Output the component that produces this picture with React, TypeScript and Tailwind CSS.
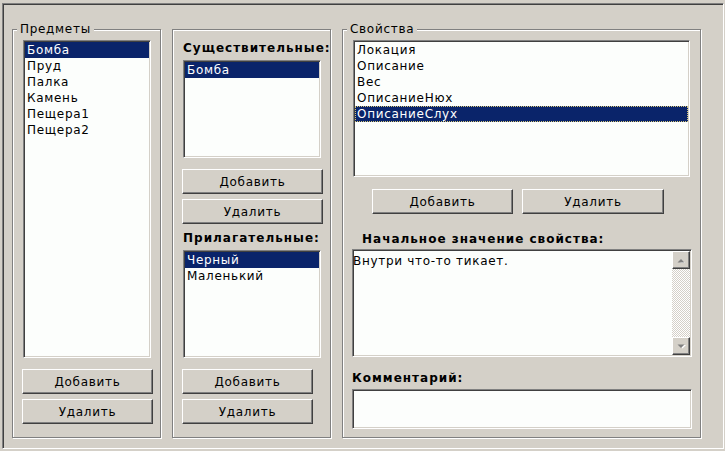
import React from "react";

const sunken =
  "border border-t-[#808080] border-l-[#808080] border-b-white border-r-white shadow-[inset_1px_1px_0_#404040,inset_-1px_-1px_0_#d4d0c8]";

function Group({
  title,
  className,
  children,
}: {
  title?: string;
  className: string;
  children: React.ReactNode;
}) {
  return (
    <div
      className={`relative flex flex-col border border-[#808080] shadow-[inset_1px_1px_0_#ffffff,1px_1px_0_#ffffff] ${className}`}
    >
      {title && (
        <span className="absolute -top-[9px] left-[4px] bg-[#d4d0c8] px-[3px] leading-4">
          {title}
        </span>
      )}
      {children}
    </div>
  );
}

function Button({ label, className }: { label: string; className: string }) {
  return (
    <button
      className={`h-[25px] border border-t-white border-l-white border-r-[#404040] border-b-[#404040] bg-[#d4d0c8] text-center leading-4 text-black shadow-[inset_-1px_-1px_0_#808080] ${className}`}
    >
      {label}
    </button>
  );
}

function ListBox({
  items,
  selected,
  focused,
  className,
}: {
  items: string[];
  selected: number;
  focused?: boolean;
  className: string;
}) {
  return (
    <div className={`flex flex-col bg-[#fcfefc] p-px ${sunken} ${className}`}>
      {items.map((it, i) => (
        <div
          key={it}
          className={
            i === selected
              ? `h-4 bg-[#0a246a] px-[2px] leading-4 text-white ${
                  focused ? "outline outline-1 -outline-offset-1 outline-dotted outline-[#d8c878]" : ""
                }`
              : "h-4 px-[2px] leading-4 text-black"
          }
        >
          {it}
        </div>
      ))}
    </div>
  );
}

function Arrow({ up }: { up?: boolean }) {
  return (
    <svg width="9" height="5" viewBox="0 0 9 5" className="block">
      {up ? (
        <>
          <polygon points="1,5 8,5 4.5,1.5" fill="#ffffff" transform="translate(1,1)" />
          <polygon points="0.5,4.5 7.5,4.5 4,1" fill="#808080" />
        </>
      ) : (
        <>
          <polygon points="1,1 8,1 4.5,4.5" fill="#ffffff" transform="translate(1,0)" />
          <polygon points="0.5,0.5 7.5,0.5 4,4" fill="#808080" />
        </>
      )}
    </svg>
  );
}

function ScrollButton({ up }: { up?: boolean }) {
  return (
    <div className="flex h-[18px] w-[18px] items-center justify-center border border-t-white border-l-white border-r-[#404040] border-b-[#404040] bg-[#d4d0c8] shadow-[inset_-1px_-1px_0_#808080]">
      <Arrow up={up} />
    </div>
  );
}

export default function App() {
  return (
    <div className="h-[451px] w-[725px] bg-[#d4d0c8] pl-[2px] pt-[3px] font-['DejaVu_Sans',sans-serif] text-[12px] tracking-[0.7px] text-black">
      <div className="flex h-[446px] w-[722px] gap-[11px] border border-t-[#808080] border-l-[#808080] border-b-white border-r-white pl-[9px] pt-[25px] shadow-[inset_1px_1px_0_#404040]">
        {/* Items */}
        <Group title="Предметы" className="h-[409px] w-[149px]">
          <ListBox
            items={["Бомба", "Пруд", "Палка", "Камень", "Пещера1", "Пещера2"]}
            selected={0}
            className="ml-[10px] mt-[10px] h-[318px] w-[128px]"
          />
          <Button label="Добавить" className="ml-[9px] mt-[11px] w-[131px]" />
          <Button label="Удалить" className="ml-[9px] mt-[5px] w-[131px]" />
        </Group>

        {/* Nouns / adjectives */}
        <Group className="h-[409px] w-[159px]">
          <div className="ml-[10px] mt-[10px] font-bold leading-4 tracking-[1px]">Существительные:</div>
          <ListBox items={["Бомба"]} selected={0} className="ml-[10px] mt-[4px] h-[98px] w-[138px]" />
          <Button label="Добавить" className="ml-[9px] mt-[11px] w-[141px]" />
          <Button label="Удалить" className="ml-[9px] mt-[5px] w-[141px]" />
          <div className="ml-[10px] mt-[6px] font-bold leading-4 tracking-[1px]">Прилагательные:</div>
          <ListBox
            items={["Черный", "Маленький"]}
            selected={0}
            className="ml-[10px] mt-[4px] h-[108px] w-[138px]"
          />
          <Button label="Добавить" className="ml-[9px] mt-[11px] w-[131px]" />
          <Button label="Удалить" className="ml-[9px] mt-[5px] w-[131px]" />
        </Group>

        {/* Properties */}
        <Group title="Свойства" className="h-[409px] w-[359px]">
          <ListBox
            items={["Локация", "Описание", "Вес", "ОписаниеНюх", "ОписаниеСлух"]}
            selected={4}
            focused
            className="ml-[10px] mt-[10px] h-[137px] w-[337px]"
          />
          <div className="ml-[29px] mt-[12px] flex gap-[9px]">
            <Button label="Добавить" className="w-[141px]" />
            <Button label="Удалить" className="w-[142px]" />
          </div>
          <div className="ml-[19px] mt-[17px] font-bold leading-4 tracking-[1px]">
            Начальное значение свойства:
          </div>
          <div className={`ml-[9px] mt-[2px] flex h-[108px] w-[340px] bg-[#fcfefc] py-px pr-px ${sunken}`}>
            <div className="flex-1 pt-[2px] leading-4">Внутри что-то тикает.</div>
            <div className="flex w-[18px] flex-col bg-[repeating-conic-gradient(#d4d0c8_0_25%,#ffffff_0_50%)] bg-[length:2px_2px]">
              <ScrollButton up />
              <div className="flex-1" />
              <ScrollButton />
            </div>
          </div>
          <div className="ml-[9px] mt-[13px] font-bold leading-4 tracking-[1px]">Комментарий:</div>
          <div className={`ml-[9px] mt-[3px] h-[40px] w-[340px] bg-[#fcfefc] ${sunken}`} />
        </Group>
      </div>
    </div>
  );
}
